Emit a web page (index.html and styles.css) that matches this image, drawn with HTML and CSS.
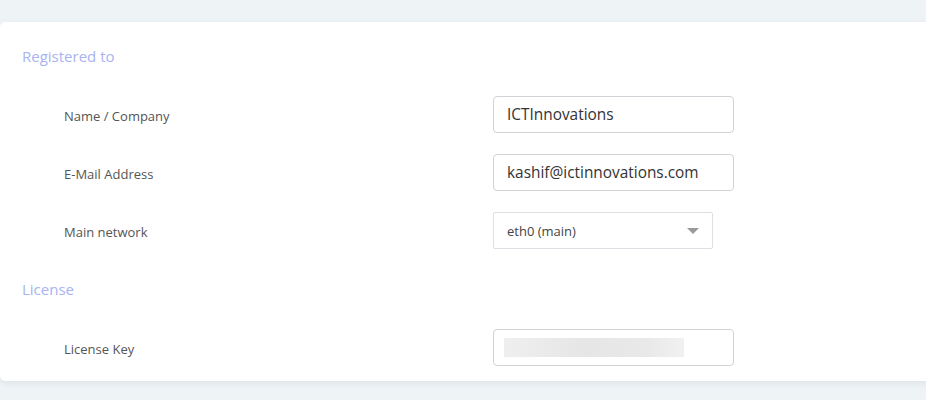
FILE: index.html
```html
<!DOCTYPE html>
<html>
<head>
<meta charset="utf-8">
<link rel="stylesheet" href="styles.css">
</head>
<body>
<div class="page">
  <div class="card">
    <h3 class="section-title">Registered to</h3>
    <div class="rows">
      <div class="row">
        <label class="label">Name / Company</label>
        <div class="input">ICTInnovations</div>
      </div>
      <div class="row">
        <label class="label">E-Mail Address</label>
        <div class="input">kashif@ictinnovations.com</div>
      </div>
      <div class="row">
        <label class="label">Main network</label>
        <div class="select"><span>eth0 (main)</span><span class="caret"></span></div>
      </div>
    </div>
    <h3 class="section-title license-title">License</h3>
    <div class="rows">
      <div class="row">
        <label class="label">License Key</label>
        <div class="input"><span class="blurred"></span></div>
      </div>
    </div>
  </div>
</div>
</body>
</html>
```
FILE: styles.css
```css
html, body {
  margin: 0;
  padding: 0;
}
body {
  background: #eef3f6;
  font-family: "Open Sans", "Noto Sans", sans-serif;
  width: 926px;
  height: 400px;
  overflow: hidden;
}
.page {
  padding-top: 22px;
}
.card {
  background: #fff;
  width: 960px;
  border-radius: 5px 0 0 5px;
  box-shadow: 0 2px 6px rgba(60, 80, 100, 0.10);
  padding: 24px 0 15px 22px;
  box-sizing: border-box;
}
.section-title {
  margin: 0;
  font-weight: 400;
  font-size: 15px;
  line-height: 20px;
  color: #a8b3f2;
}
.license-title {
  margin-top: 30px;
}
.rows {
  display: flex;
  flex-direction: column;
  gap: 21px;
  margin-top: 30px;
}
.license-title + .rows {
  margin-top: 30px;
}
.row {
  display: grid;
  grid-template-columns: 429px auto;
  align-items: center;
  padding-left: 42px;
}
.label {
  font-size: 13px;
  color: #555;
  padding-top: 2px;
}
.input {
  width: 241px;
  height: 37px;
  box-sizing: border-box;
  border: 1px solid #cfd3d8;
  border-radius: 4px;
  padding: 0 13px;
  font-size: 15.4px;
  color: #333;
  display: flex;
  align-items: center;
}
.select {
  width: 220px;
  height: 37px;
  box-sizing: border-box;
  border: 1px solid #dcdfe3;
  border-radius: 2px;
  padding: 0 13px;
  font-size: 13px;
  color: #444;
  display: flex;
  align-items: center;
  justify-content: space-between;
}
.caret {
  width: 0;
  height: 0;
  border-left: 6px solid transparent;
  border-right: 6px solid transparent;
  border-top: 6px solid #9a9a9a;
}
.blurred {
  display: block;
  width: 180px;
  height: 19px;
  margin-left: -3px;
  background: linear-gradient(to right, #efefef, #e6e6e6 45%, #e9e9e9 80%, #f1f1f1);
}
```
